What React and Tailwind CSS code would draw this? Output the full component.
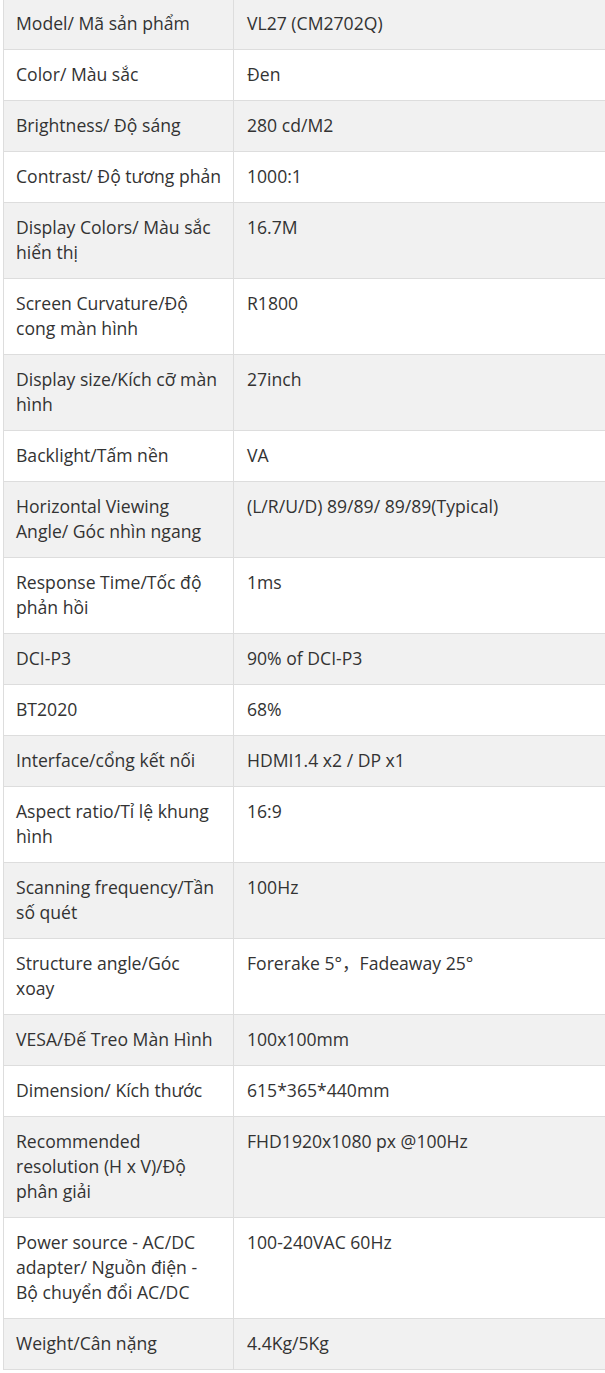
const rows = [
  ["Model/ Mã sản phẩm", "VL27 (CM2702Q)"],
  ["Color/ Màu sắc", "Đen"],
  ["Brightness/ Độ sáng", "280 cd/M2"],
  ["Contrast/ Độ tương phản", "1000:1"],
  ["Display Colors/ Màu sắc hiển thị", "16.7M"],
  ["Screen Curvature/Độ cong màn hình", "R1800"],
  ["Display size/Kích cỡ màn hình", "27inch"],
  ["Backlight/Tấm nền", "VA"],
  ["Horizontal Viewing Angle/ Góc nhìn ngang", "(L/R/U/D) 89/89/ 89/89(Typical)"],
  ["Response Time/Tốc độ phản hồi", "1ms"],
  ["DCI-P3", "90% of DCI-P3"],
  ["BT2020", "68%"],
  ["Interface/cổng kết nối", "HDMI1.4 x2 / DP x1"],
  ["Aspect ratio/Tỉ lệ khung hình", "16:9"],
  ["Scanning frequency/Tần số quét", "100Hz"],
  ["Structure angle/Góc xoay", "Forerake 5°，Fadeaway 25°"],
  ["VESA/Đế Treo Màn Hình", "100x100mm"],
  ["Dimension/ Kích thước", "615*365*440mm"],
  ["Recommended resolution (H x V)/Độ phân giải", "FHD1920x1080 px @100Hz"],
  ["Power source - AC/DC adapter/ Nguồn điện - Bộ chuyển đổi AC/DC", "100-240VAC 60Hz"],
  ["Weight/Cân nặng", "4.4Kg/5Kg"],
];

export default function App() {
  return (
    <div
      className="w-[605px] overflow-hidden bg-white pl-[3px] text-[#333] pb-[4px]"
      style={{ fontFamily: '"Open Sans", "Liberation Sans", "Noto Sans CJK SC", sans-serif' }}
    >
      <div className="-mt-[2px]">
        <table className="w-[640px] border-collapse text-[17.6px] leading-[25px]">
          <tbody>
            {rows.map(([label, value], i) => (
              <tr key={label} className={i % 2 === 0 ? "bg-[#f1f1f1]" : "bg-white"}>
                <td className="w-[230px] border border-[#ddd] px-3 pt-[12px] pb-[13px] align-top">
                  {label}
                </td>
                <td className="border border-[#ddd] px-[13px] pt-[12px] pb-[13px] align-top">
                  {value}
                </td>
              </tr>
            ))}
          </tbody>
        </table>
      </div>
    </div>
  );
}
